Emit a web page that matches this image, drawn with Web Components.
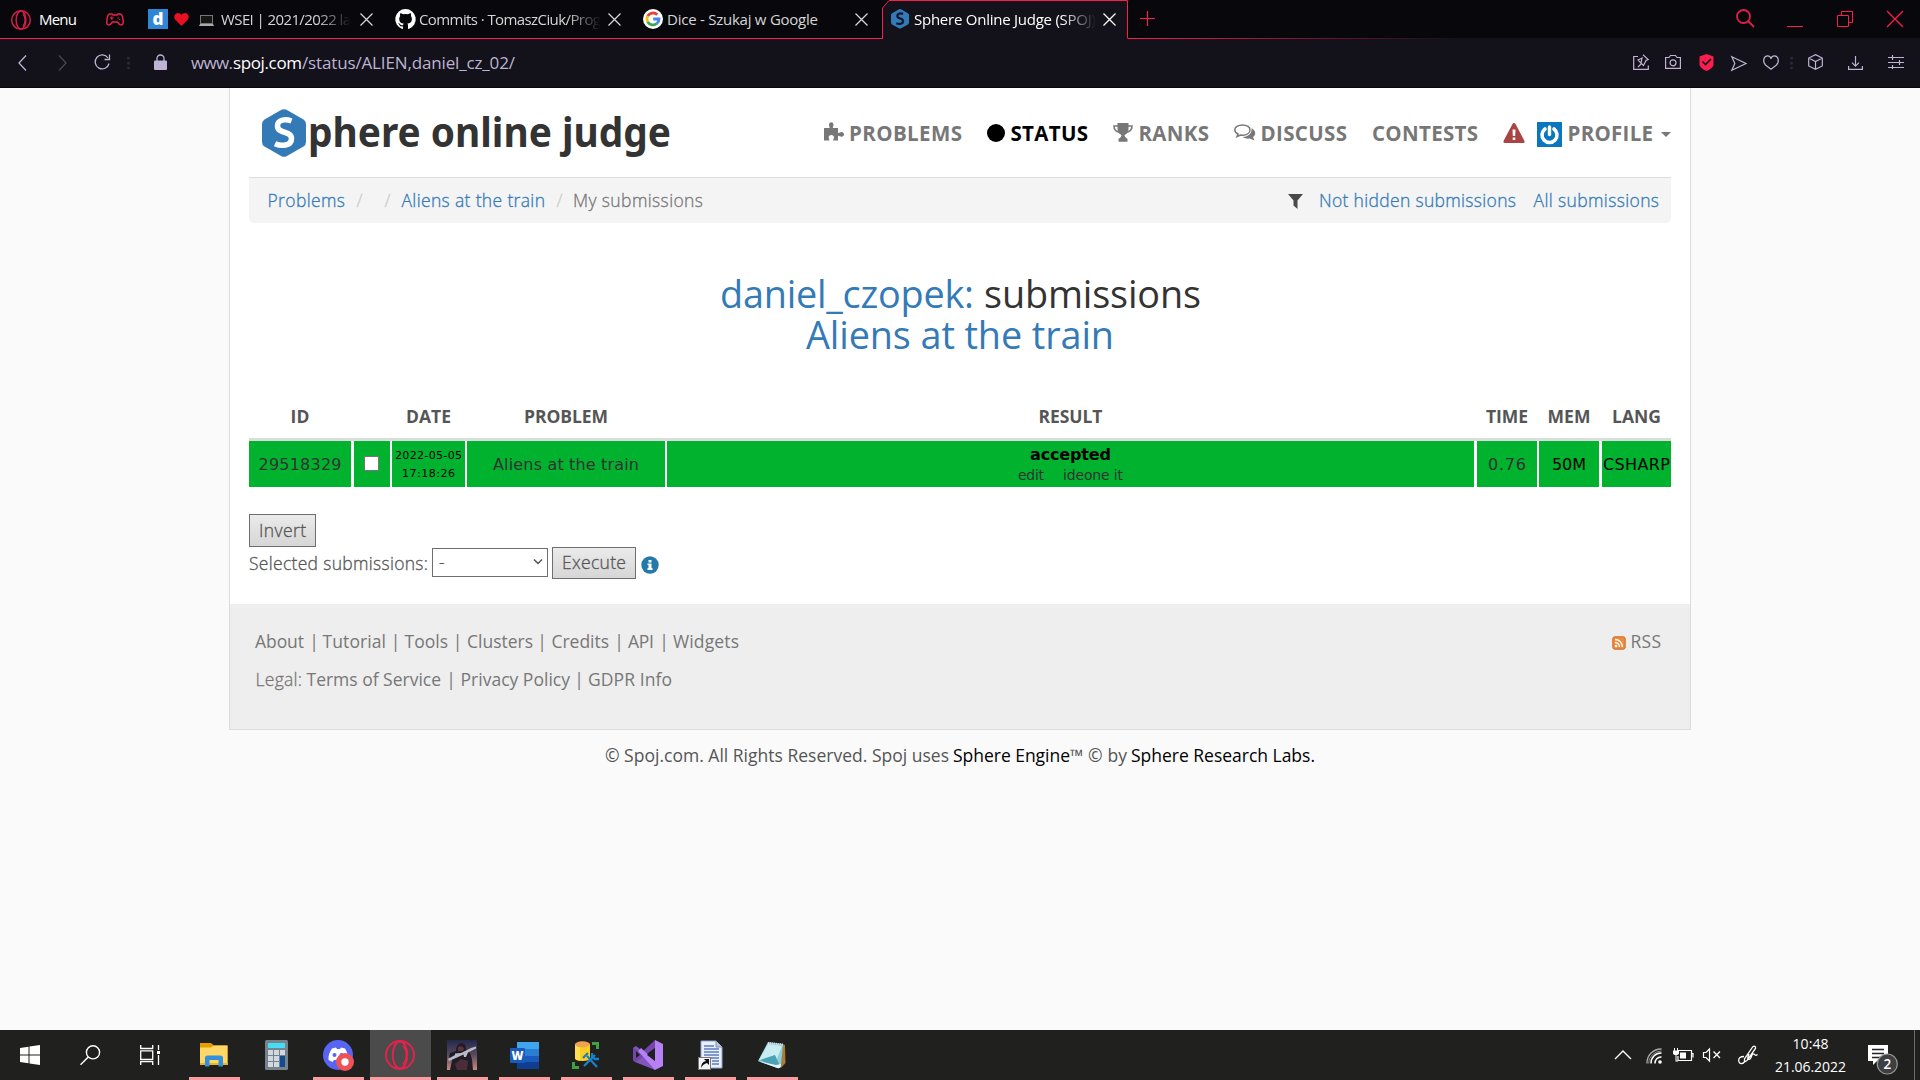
<!DOCTYPE html>
<html lang="en">
<head>
<meta charset="utf-8">
<title>Sphere Online Judge (SPOJ)</title>
<style>
html,body{margin:0;height:100%;overflow:hidden;background:#fafafa}
body{font-family:"Open Sans","Noto Sans",sans-serif}
</style>
</head>
<body>
<desktop-screen></desktop-screen>
<script>
const R='#fa1e4e', L='#bdb4d3';
const S=(c,w=1.2)=>`fill="none" stroke="${c}" stroke-width="${w}"`;
const hex=(bg,fg)=>`<path d="M19.500 .8Q22-.5 24.500.8L41.500 10.500Q44 12 44 15V33Q44 36 41.500 37.500L24.500 47.200Q22 48.500 19.500 47.200L2.500 37.500Q0 36 0 33V15Q0 12 2.500 10.500Z" fill="${bg}"/><path d="M29.500 12C24 10 15.500 10 15.500 17C15.500 25.500 29.500 21 29.500 29.500C29.500 37 19.500 37.500 13 34.700" fill="none" stroke="${fg}" stroke-width="5.500"/>`;
const ring=(c,w)=>`<circle cx="15" cy="15" r="14" fill="none" stroke="${c}" stroke-width="${w}"/><ellipse cx="15" cy="15" rx="7.300" ry="13.500" fill="none" stroke="${c}" stroke-width="${w}"/>`;
const ICONS={
 opera:[20,20,`<g transform="scale(.667)">${ring('#d31f46',2.2)}<path d="M18 5Q24 15 18 25" ${S('#d31f46',1.8)}/></g>`],
 operaBig:[30,30,ring('#e8204c',1.9)+`<path d="M18 5.500Q25 15 18 24.500" ${S('#e8204c',1.600)}/>`],
 pad:[18,13,`<path d="M4 1H6L7 2H11L12 1H14Q16 1 16.800 5L17.300 9.500Q17 12 15 12Q13.500 12 11.500 9H6.500Q4.500 12 3 12Q1 12 .7 9.500L1.200 5Q2 1 4 1Z" ${S('#e8204c',1.5)}/><path d="M4 5H7.500M5.800 3.400V6.800M11.500 4.800h1.200M13 6.500h1.200" ${S('#e8204c',1.2)}/>`],
 d:[20,20,`<rect width="20" height="20" fill="#2f86d4"/><text x="10" y="15.500" text-anchor="middle" font-family="Open Sans" font-weight="800" font-size="17" fill="#fff">d</text>`],
 heartRed:[15,13,`<path d="M7.500 13L1.300 6.800C-1 4 1 0 4 0C6 0 7 1 7.500 2.200C8 1 9 0 11 0C14 0 16 4 13.700 6.800Z" fill="#e81123"/>`],
 laptop:[15,11,`<rect x="1.500" y=".5" width="12" height="8" fill="#161616" stroke="#777"/><path d="M1 9H14L15 11H0Z" fill="#aaa"/>`],
 x:[13,13,`<path d="M.5 .5L12.500 12.500M12.500 .5L.5 12.500" ${S('currentColor',1.3)}/>`],
 github:[21,20,`<path d="M10.500 0A10.200 10.200 0 0 0 7.300 19.900C7.800 20 8 19.700 8 19.400V17.500C5.200 18.100 4.600 16.300 4.600 16.300C4.100 15.100 3.500 14.800 3.500 14.800C2.600 14.200 3.600 14.200 3.600 14.200C4.600 14.300 5.100 15.200 5.100 15.200C6 16.700 7.500 16.300 8.100 16C8.200 15.400 8.500 14.900 8.800 14.600C6.500 14.300 4.200 13.500 4.200 9.700C4.200 8.600 4.600 7.700 5.200 7C5.100 6.700 4.800 5.700 5.300 4.300C5.300 4.300 6.200 4 8.100 5.300A10 10 0 0 1 13 5.300C14.900 4 15.800 4.300 15.800 4.300C16.300 5.700 16 6.700 15.900 7C16.500 7.700 16.900 8.600 16.900 9.700C16.900 13.500 14.600 14.300 12.300 14.600C12.700 14.900 13 15.500 13 16.400V19.400C13 19.700 13.200 20 13.700 19.900A10.200 10.200 0 0 0 10.500 0Z" fill="#fff"/>`],
 google:[20,20,`<circle cx="10" cy="10" r="10" fill="#fff"/><g fill="none" stroke-width="2.800"><path d="M14.300 5.800A6 6 0 0 0 4.700 7.200" stroke="#ea4335"/><path d="M4.700 7.200A6 6 0 0 0 4.700 12.800" stroke="#fbbc05"/><path d="M4.700 12.800A6 6 0 0 0 13.900 14.500" stroke="#34a853"/><path d="M10.200 10H16A6 6 0 0 1 13.900 14.500" stroke="#4285f4"/></g>`],
 spojSmall:[18,20,`<g transform="scale(.41)">${hex('#337ab7','#0e1730')}</g>`],
 plus:[15,15,`<path d="M7.500 0V15M0 7.500H15" ${S(R,1.2)}/>`],
 search:[19,19,`<circle cx="7.500" cy="7.500" r="6.500" ${S('#e02049',1.8)}/><path d="M12 12L18 18" ${S('#e02049',1.8)}/>`],
 min:[16,16,`<path d="M0 15.500H16" ${S(R,1)}/>`],
 restore:[16,16,`<path d="M.5 4.500H11.500V15.500H.5ZM4.500 4.500V.5H15.500V11.500H11.500" ${S(R,1)}/>`],
 close:[16,16,`<path d="M0 0L16 16M16 0L0 16" ${S(R,1.3)}/>`],
 back:[9,16,`<path d="M8 .5L1 8L8 15.500" ${S('currentColor',1.3)}/>`],
 fwd:[9,16,`<path d="M1 .5L8 8L1 15.500" ${S('currentColor',1.3)}/>`],
 reload:[16,16,`<path d="M14 4A7 7 0 1 0 15 9.500" ${S(L,1.3)}/><path d="M15.500 .5V5.500H10.500" ${S(L,1.3)}/>`],
 dots:[3,16,`<path d="M1.500 2V14" ${S('#2e2a3b',2.6)} stroke-dasharray="2.600 2.400"/>`],
 lock:[13,16,`<path d="M3 7V4.500A3.500 3.500 0 0 1 10 4.500V7" ${S(L,1.3)}/><rect y="6.500" width="13" height="9.500" rx="1" fill="${L}"/>`],
 pin:[16,16,`<path d="M5 2.500H.7V15.300H15.300V11.500" ${S(L)}/><path d="M10 .8L15.200 5.500L13 6.500L11.500 9.500L10.500 11.500L8.500 9.500L5 13M8 9.200L5 6L7.500 4.800L9 4Z" ${S(L)}/>`],
 camera:[16,16,`<path d="M.6 3.500H4L5.500 1.500H10.500L12 3.500H15.400V14.400H.6Z" ${S(L)}/><circle cx="8" cy="8.800" r="3" ${S(L)}/>`],
 shield:[15,17,`<path d="M7.500 0L14.500 2.500V11Q13.500 14.500 7.500 17Q1.500 14.500 .5 11V2.500Z" fill="${R}"/><path d="M3.500 7.500L6.500 10.500L12 5" ${S('#121017',1.600)}/>`],
 send:[16,15,`<path d="M.8 .8L15 7.500L.8 14.200L3.800 7.500Z" ${S(L)}/>`],
 heart:[16,15,`<path d="M8 14.200L2.500 10C-1 6 1 .8 4.500 .8C7 .8 7.800 2.500 8 4C8.200 2.500 9 .8 11.500 .8C15 .8 17 6 13.500 10Z" ${S(L)}/>`],
 cube:[15,16,`<path d="M7.500 .6L14.300 4V12L7.500 15.400L.7 12V4ZM.7 4L7.500 7.500L14.300 4M7.500 7.500V15.400" ${S(L)}/>`],
 download:[15,14,`<path d="M7.500 0V10M4 6.700L7.500 10.200L11 6.700M.6 10V13.400H14.400V10" ${S(L)}/>`],
 sliders:[16,14,`<path d="M0 2.500H16M0 7.500H16M0 12.500H16M4.500 0V5M11.500 5V10M4.500 10V14" ${S(L,1.2)}/>`],
 puzzle:[20,19,`<path d="M0 6H5C6.500 6 5 4.500 5 3C5 1 6 .2 7.200 .2C8.500 .2 9.500 1 9.500 3C9.500 4.500 8 6 9.500 6H14V10C14 12.500 15.500 10 17.500 10C19 10 20 11 20 12.300C20 13.800 19 14.800 17.500 14.800C15.500 14.800 14 12.500 14 15V18.500H9.800C8.300 18.500 10 17 10 15.500C10 14 9 13 7.300 13C5.500 13 4.700 14 4.700 15.500C4.700 17 6.300 18.500 4.700 18.500H0Z" fill="#777"/>`],
 dot:[18,18,`<circle cx="9" cy="9" r="9" fill="#000"/>`],
 trophy:[20,19,`<path d="M4.500 0H15.500V6Q15.500 10 11.500 12Q11.500 14.500 14.500 16V18.700H5.500V16Q8.500 14.500 8.500 12Q4.500 10 4.500 6Z" fill="#777"/><path d="M5 3H1Q.8 8 7 9.500M15 3H19Q19.200 8 13 9.500" ${S('#777',1.5)}/>`],
 chat:[22,17,`<path d="M8.500 1C13 1 16 3.300 16 6C16 9 13 11.200 8.500 11.200L6.500 11L3 12.500L4 10C2 9 .8 7.800 .8 6C.8 3.300 4 1 8.500 1Z" ${S('#777',1.5)}/><path d="M17.500 4C22.500 7 22 11 19 13L20.500 16.500L16 14.500C12.500 15 10 14 8.500 13C15 13 18.500 8.500 17.500 4Z" fill="#777"/>`],
 warn:[22,20,`<path d="M11 0Q12 0 12.500 1L21.500 18Q22 20 20.500 20H1.500Q0 20 .5 18L9.500 1Q10 0 11 0Z" fill="#a94442"/><path d="M9.500 6.500H12.500L12.200 13H9.800ZM9.700 14.500H12.300V17H9.700Z" fill="#fff"/>`],
 avatar:[25,25,`<rect width="25" height="25" fill="#0a76bd"/><path d="M8 7A7.500 7.500 0 1 0 17 7" ${S('#fff',3.600)} stroke-linecap="round"/><path d="M12.500 5V12.500" ${S('#fff',3.400)} stroke-linecap="round"/>`],
 caret:[10,5,`<path d="M0 0H10L5 5Z" fill="#777"/>`],
 filter:[15,15,`<path d="M0 0H15L9.500 6.500V15L5.500 11.500V6.500Z" fill="#4a4a4a"/>`],
 info:[18,18,`<circle cx="9" cy="9" r="8.700" fill="#2479a9"/><path d="M7.500 4H10.500V6.500H7.500ZM6.500 7.500H10.500V12H11.500V14H6.500V12H7.500V9H6.500Z" fill="#fff"/>`],
 rss:[14,14,`<rect x=".8" y=".8" width="12.400" height="12.400" rx="2" fill="#f08a3c" stroke="#cf6a27"/><circle cx="4" cy="10" r="1.300" fill="#fff"/><path d="M3 6.500A4.500 4.500 0 0 1 7.500 11M3 3.500A7.500 7.500 0 0 1 10.500 11" ${S('#fff',1.300)}/>`],
 logo:[410,50,`<g>${hex('#337ab7','#fff')}</g><text x="46" y="38" font-family="Noto Sans" font-weight="700" font-size="41.500" fill="#333" textLength="363" lengthAdjust="spacingAndGlyphs">phere online judge</text>`],
 win:[20,20,`<path d="M0 3L8.500 1.700V9.500H0ZM9.500 1.500L20 0V9.500H9.500ZM0 10.500H8.500V18.300L0 17ZM9.500 10.500H20V20L9.500 18.500Z" fill="#fff"/>`],
 find:[20,20,`<circle cx="13" cy="7.300" r="6.600" ${S('#fff',1.400)}/><path d="M8.300 12L.5 19.700" ${S('#fff',1.500)}/>`],
 task:[20,20,`<path d="M.7 0V3.500H12.700V0M.7 20V16.500H12.700V20M.7 5.800H12.700V14.300H.7ZM18.500 0V5M18.500 10V20" ${S('#fff',1.300)}/><rect x="17" y="6" width="3" height="3" fill="#fff"/>`],
 folder:[28,24,`<path d="M0 0H11L14 2.500H27.500V22H0Z" fill="#e59d00"/><path d="M0 4.500H11L14 2.500H27.500V22H0Z" fill="#ffd765"/><path d="M0 20H28V22H0Z" fill="#e8b32f"/><path d="M5 23.500V15Q5 12.500 7.500 12.500H20.500Q23 12.500 23 15V23.500H18.500V17H9.500V23.500Z" fill="#3290dd"/>`],
 calc:[23,30,`<rect width="23" height="30" rx="1.500" fill="#77828d"/><rect x="3" y="3" width="17" height="5" fill="#45dcf8"/><g fill="#d0d8e0"><path d="M3 10h5v5H3zM9 10h5v5H9zM15 10h5v5h-5zM3 16h5v5H3zM9 16h5v5H9zM3 22h5v5H3zM9 22h5v5H9z"/></g><path d="M15 16h5v11h-5z" fill="#104a90"/>`],
 discord:[31,31,`<circle cx="15" cy="15" r="15" fill="#5865f2"/><path d="M9 8.500L13 7.500L14 9H17L18 7.500L22 8.500Q25.500 14 25 20L21 22L19.500 20H11L9.500 22L5.500 20Q5 14 9 8.500Z" fill="#fff"/><circle cx="11.500" cy="15" r="2" fill="#5865f2"/><circle cx="18.500" cy="15" r="2" fill="#5865f2"/><circle cx="22" cy="22" r="9" fill="#ed5258"/><circle cx="22" cy="22" r="3.700" fill="#fff"/>`],
 cs:[30,30,`<defs><linearGradient id="sky" x1="0" y1="0" x2="0" y2="1"><stop offset="0" stop-color="#23284a"/><stop offset=".5" stop-color="#5a4a60"/><stop offset="1" stop-color="#c98a80"/></linearGradient></defs><rect width="30" height="30" fill="url(#sky)"/><path d="M3 30L5 20L2 17L3 13L9 11Q9 4 14 3Q19 3 19 9L23 13L25 19L26 30Z" fill="#221c26"/><path d="M11 7Q14 5 17 8L16 11H11Z" fill="#5a3634"/><path d="M1 19L8 15L8 13.500L14 13L24 8L29 6.500V8.500L21 12.500L19 17L17 17L16.500 14.500L10 17.500L2 21Z" fill="#b9bcc6"/><path d="M8 24L14 19L21 21L20 30H10Z" fill="#4a2d38"/>`],
 word:[29,27,`<path d="M7 0H29V7H7Z" fill="#41a5ee"/><path d="M7 7H29V14H7Z" fill="#2b7cd3"/><path d="M7 14H29V20H7Z" fill="#185abd"/><path d="M7 20H29V27H7Z" fill="#103f91"/><rect y="6" width="15" height="15" rx="1" fill="#185abd"/><text x="7.500" y="18" text-anchor="middle" font-family="Open Sans" font-weight="800" font-size="11.500" fill="#fff">W</text>`],
 ssms:[28,28,`<path d="M3 3V17Q3 20 10.500 20Q18 20 18 17V3Z" fill="#ffcf20"/><path d="M3 3V17Q3 19 8 19.500V5Z" fill="#ffe052"/><ellipse cx="10.500" cy="3.300" rx="7.500" ry="3" fill="#f0a453"/><path d="M20 2.500H25.500V8M1.500 21V26.500H7" ${S('#3fa044',3)}/><path d="M12 25L23 14M15 15L25 26M11 17L16 12M20 12V16L23 18H27" ${S('#1680cc',2.300)}/>`],
 vs:[30,30,`<path d="M0 8L3 6L22 21V30L2 22L0 20Z" fill="#8155bd"/><path d="M0 8V20L3 22L22 8V0L8 13L3 9Z" fill="#7246ab"/><path d="M22 0L30 4V26L22 30L5 11L8 8L22 21Z" fill="#b681f5"/><path d="M22 8V21L14 15Z" fill="#202020"/><path d="M3 11V18L7 15Z" fill="#202020"/>`],
 doc:[25,30,`<path d="M3 1H18L24 7V28H3Z" fill="#e9effb" stroke="#8ea5cf"/><path d="M18 1V7H24" fill="#b8c8e5" stroke="#7890bd"/><path d="M6 6H16M6 9H21M6 12H21M6 15H21M12 18H21M14 21H21M14 24H21" ${S('#5c7dbb',1.300)}/><rect x=".5" y="17.500" width="12" height="12" fill="#f3f3f3" stroke="#777"/><path d="M3 28Q3 22 8 21L6 19H11V25L9 23Q5 24 3 28Z" fill="#111"/>`],
 note:[28,28,`<path d="M24 3L27 4L27.500 22L23 27Z" fill="#a87c38"/><path d="M10 1L25 3L23 26Q22 28 18 26.500L0 20Z" fill="#8fcdd8"/><path d="M10 3L24 5L19 18L1 19Z" fill="#c7edf0"/><path d="M2 19L17 14L22 25L18 26Z" fill="#4aa3b4"/><path d="M0 20L18 24L23 23L22.500 26Q21 28 18 26.500Z" fill="#e8f4f5"/><path d="M10 2L25 3.500" stroke="#ddd" stroke-width="2" stroke-dasharray="1 1"/>`],
 up:[16,10,`<path d="M0 9L8 1L16 9" ${S('#fff',1.4)}/>`],
 wifi:[16,16,`<path d="M1 15.500A14 14 0 0 1 15.500 1" ${S('#aaa',1.400)}/><path d="M5 15.500A10 10 0 0 1 15.500 5M9 15.500A6 6 0 0 1 15.500 9" ${S('#fff',1.500)}/><path d="M2.500 15.500A13 13 0 0 1 15.500 3" ${S('#888',1)}/><circle cx="14" cy="14" r="1.800" fill="#fff"/>`],
 batt:[20,14,`<path d="M5 2.500H18.500V12.500H5V8M18.500 5.500H20V9.500" ${S('#fff',1.200)}/><rect x="7" y="4.500" width="6" height="6" fill="#fff"/><path d="M0 2.500H6V5Q6 7 3 7Q0 7 0 5ZM1 0H2V3H1ZM4 0H5V3H4ZM2.500 7H3.500V12.500H5V13.500H2.500Z" fill="#fff"/>`],
 mute:[18,14,`<path d="M.5 4.500H3L6.500 1V13L3 9.500H.5Z" ${S('#fff',1.200)}/><path d="M10.500 3.500L17 10M17 3.500L10.500 10" ${S('#fff',1.300)}/>`],
 pen:[20,20,`<path d="M6 11.500Q.5 11.500 .7 15.500Q1 19 4 18.500Q7 18 6.500 14L15 1.500Q18 .5 17.500 3.500L9 15.500L6.500 17M11 9Q8 16 12 14Q13 13 14 10Q15 8 16.500 9.500Q17.500 11 19.500 9.500" ${S('#fff',1.300)}/>`],
 notif:[31,31,`<path d="M0 0H20V16H9L5 20V16H0Z" fill="#fff"/><path d="M4 4.500H16M4 8.500H16M4 12.500H12" ${S('#222',1.300)}/><circle cx="19.300" cy="19" r="10" fill="#3e3f40" stroke="#999" stroke-width="1.200"/><text x="19.300" y="24" text-anchor="middle" font-family="Open Sans" font-weight="600" font-size="13.500" fill="#fff">2</text>`]
};
/* Icon from the shared set, drawn at its natural pixel size. */
class UiIcon extends HTMLElement{
 connectedCallback(){
  if(this.shadowRoot)return;
  const [w,h,b]=ICONS[this.getAttribute('name')];
  this.attachShadow({mode:'open'}).innerHTML=`<style>:host{display:block;flex:none;width:${w}px;height:${h}px}svg{display:block;overflow:visible}</style><svg width="${w}" height="${h}" viewBox="0 0 ${w} ${h}">${b}</svg>`;
 }
}
customElements.define('ui-icon',UiIcon);
/* A one-line label whose letter spacing is tuned to fill the width in its w attribute. */
class FitText extends HTMLElement{
 connectedCallback(){
  if(this.shadowRoot)return;
  const w=+this.getAttribute('w');
  this.attachShadow({mode:'open'}).innerHTML=`<style>:host{display:block;flex:none;width:${w}px;white-space:pre}span{display:inline-block}</style><span><slot></slot></span>`;
  const s=this.shadowRoot.querySelector('span'),n=this.textContent.length;
  const nat=s.getBoundingClientRect().width;
  if(n===1)s.style.marginLeft=(w-nat)/2+'px';
  else if(nat)s.style.letterSpacing=((w-nat)/(n-1)).toFixed(3)+'px';
 }
}
customElements.define('fit-text',FitText);
/* Row content: T = text (left, right, text), I = icon (left, name, vertical nudge). */
const T=(a,b,t,st='')=>({x:a-1,w:b-a+2,h:g=>`<fit-text w="${b-a+2}" style="margin-left:${g}px;${st}">${t}</fit-text>`});
const I=(a,n,dy=0,st='')=>({x:a,w:ICONS[n][0],h:g=>`<ui-icon name="${n}" style="margin-left:${g}px;${dy?`position:relative;top:${dy}px;`:''}${st}"></ui-icon>`});
const row=(start,items)=>{let c=start;return items.map(i=>{const g=+(i.x-c).toFixed(2);c=i.x+i.w;return i.h(g)}).join('')};
const def=(name,css,html)=>customElements.define(name,class extends HTMLElement{
 connectedCallback(){ if(!this.shadowRoot)this.attachShadow({mode:'open'}).innerHTML=`<style>*{box-sizing:border-box}:host{display:block;box-sizing:border-box}.r{display:flex;align-items:center}${css}</style>${html}`; }
});
/* Light text with a hairline outline: a weight between light and regular. */
const book='font-weight:300;-webkit-text-stroke:.3px currentColor';
const fade='-webkit-mask-image:linear-gradient(90deg,#000 calc(100% - 34px),transparent)';
def('tab-strip',`
:host{display:flex;height:39px;background:#08080c;color:#d5d5d5;font-size:15px;line-height:20px}
.a{width:882px;padding-bottom:8px;border-bottom:1px solid ${R}}
.b{width:246px;position:relative;padding-bottom:8px;color:#fff}
.b svg{position:absolute;left:0;top:0}.b>:not(svg){position:relative}
.c{flex:1;padding-bottom:8px;border-bottom:1px solid;border-image:linear-gradient(90deg,${R},#12101a 330px) 1}`,
`<div class="r a">${row(0,[I(11,'opera',4.5),T(40,76,'Menu','color:#fff;margin-top:7px'),I(106,'pad',4),I(148,'d',4),I(174,'heartRed',4),I(199,'laptop',5),T(222,350,'WSEI | 2021/2022 la',fade+';margin-top:7px'),I(360,'x',4.5),I(395,'github',4),T(420,600,'Commits · TomaszCiuk/Prog',fade+';margin-top:7px'),I(608,'x',4.5),I(643,'google',4),T(668,817,'Dice - Szukaj w Google','margin-top:7px'),I(855,'x',4.5)])}</div>
<div class="r b"><svg width="246" height="39"><path d="M0 38.500H.5V8L7 .5H245.500V38.500" fill="#13111a" stroke="${R}"/><path d="M1 38.500H245" stroke="#13111a"/></svg>${row(882,[I(891,'spojSmall',3.5),T(915,1095,'Sphere Online Judge (SPOJ)',fade+';top:3.500px'),I(1103,'x',3.5)])}</div>
<div class="r c">${row(1128,[I(1140,'plus',3.5),I(1736,'search',3),I(1787,'min',4),I(1837,'restore',4),I(1887,'close',4)])}</div>`);
def('address-bar',`:host{display:flex;align-items:center;height:49px;background:#13111a;color:${L};font-size:17px;line-height:24px;border-bottom:1px solid #08080c}`,
row(0,[I(18,'back'),I(58,'fwd',0,'color:#4a4656'),I(94,'reload',-1),I(127,'dots'),I(154,'lock',-1),T(192,232,'www.'),T(234,301,'spoj.com','color:#fff'),T(303,514,'/status/ALIEN,daniel_cz_02/'),I(1633,'pin',-1),I(1665,'camera',-1),I(1698.5,'shield',-.5),I(1731,'send',.5),I(1763,'heart',-1),I(1790,'dots'),I(1808,'cube',-1),I(1848,'download'),I(1888,'sliders',-1)]));
def('site-nav',`:host{display:flex;align-items:center;height:90px;color:#777;font-weight:700;font-size:20.5px;line-height:30px;border-bottom:1px solid #dcdcdc}`,
row(249,[I(262,'logo',1.5),I(824,'puzzle',-1.500),T(850,961,'PROBLEMS'),I(987,'dot'),T(1011.5,1087,'STATUS','color:#000'),I(1113,'trophy'),T(1139.5,1208,'RANKS'),I(1234,'chat'),T(1261.5,1346,'DISCUSS'),T(1373,1477,'CONTESTS'),I(1503,'warn'),I(1537,'avatar',1.500),T(1568.5,1652,'PROFILE'),I(1661,'caret',1.500)]));
def('crumb-bar',`:host{display:flex;align-items:center;height:45px;padding-bottom:1px;background:#f4f4f4;border-radius:0 0 5px 5px;color:#337ab7;${book};font-size:17.5px;line-height:25px}`,
row(249,[T(268.5,344,'Problems'),T(357,362,'/','color:#ccc'),T(385,390,'/','color:#ccc'),T(402.5,544,'Aliens at the train'),T(557,562,'/','color:#ccc'),T(574,702,'My submissions','color:#777'),I(1287.5,'filter',1),T(1320,1515,'Not hidden submissions'),T(1534.5,1658,'All submissions')]));
def('page-title',`:host{height:181px;padding-top:50px;color:#333;font-size:37.8px;line-height:41.25px}.r{color:#337ab7}`,
`<div class="r">${row(249,[T(721,973,'daniel_czopek:'),T(985,1200,'submissions','color:#333')])}</div><div class="r">${row(249,[T(807,1113,'Aliens at the train')])}</div>`);
const ctr=(w,t,st='')=>`<fit-text w="${w}" style="${st}">${t}</fit-text>`;
def('results-table',`
.g{display:grid;grid-template-columns:105px 38px 75px 200px 810px 62px 63px 69px}
.g>div{display:flex;flex-direction:column;align-items:center;justify-content:center;margin-right:2px}
.g>div:first-child,.g>div:nth-child(5),.g>div:nth-child(7){margin-right:3px}.g>div:last-child{margin-right:0}
.h{height:37px;border-bottom:3px solid #dcdcdc;color:#555;font-weight:700;font-size:17.5px;line-height:24px;padding-bottom:12px}
.d{height:46px;color:#000;font-family:"DejaVu Sans",sans-serif;font-size:16px;line-height:20px}
.d>div{background:#00b22d;padding-top:1px}.k{color:#333}
input{margin:0 1px 2px 0;width:15px;height:15px;appearance:none;background:#fff;border:1px solid #767676;border-width:1px 1.500px 1.500px 1px}`,
`<div class="g h"><div>${ctr(19,'ID')}</div><div></div><div>${ctr(45,'DATE')}</div><div>${ctr(84,'PROBLEM')}</div><div>${ctr(64,'RESULT')}</div><div>${ctr(42,'TIME')}</div><div>${ctr(43,'MEM')}</div><div>${ctr(49,'LANG')}</div></div>
<div class="g d"><div class="k">${ctr(83,'29518329')}</div><div><input type="checkbox"></div><div style="font-size:11px;line-height:18px;padding-top:1px">${ctr(67,'2022-05-05')}${ctr(53,'17:18:26')}</div><div class="k">${ctr(146,'Aliens at the train')}</div><div style="padding:0 0 1px">${ctr(81,'accepted','font-weight:700;height:22px;line-height:24px')}<div class="r k" style="font-size:14px;height:20px;">${ctr(26,'edit')}${ctr(60,'ideone it','margin-left:19px')}</div></div><div class="k">${ctr(38,'0.76')}</div><div>${ctr(34,'50M')}</div><div>${ctr(67,'CSHARP')}</div></div>`);
def('submission-actions',`:host{padding-top:27px;height:117px;color:#555;${book};font-size:17.5px;line-height:24px}
.btn{display:flex;justify-content:center;border:1px solid #6e6e6e;background:linear-gradient(#ebebeb,#d6d6d6);height:33px;line-height:31px;width:67px}
.sel{display:flex;align-items:center;justify-content:space-between;width:116px;height:29px;border:1px solid #6e6e6e;background:#fff;margin:-2px 0 0 4px;padding:0 4px 0 6px}`,
`<div class="btn">${ctr(47,'Invert')}</div><div class="r" style="height:32px"><fit-text w="179">Selected submissions:</fit-text><div class="sel"><span>-</span><svg width="10" height="6"><path d="M1 .5L5 4.500L9 .5" fill="none" stroke="#555" stroke-width="1.500"/></svg></div><div class="btn" style="width:84px;height:32px;line-height:29px;margin:-1px 0 0 4px">${ctr(64,'Execute')}</div><ui-icon name="info" style="margin:3px 0 0 5px"></ui-icon></div>`);
const bar=x=>T(x-3,x+3,'|');
def('site-footer',`:host{height:126px;padding-top:18px;background:#eee;border:1px solid #dcdcdc;border-top:0;color:#777;font-size:17.5px;line-height:38px}`,
`<div class="r">${row(230,[T(256,303,'About'),bar(314),T(323.5,385,'Tutorial'),bar(395.5),T(405.5,447,'Tools'),bar(457.5),T(468,532,'Clusters'),bar(542),T(552.5,608,'Credits'),bar(619),T(629,653,'API'),bar(664),T(674,738,'Widgets'),I(1612,'rss',2),T(1631.5,1660,'RSS')])}</div>
<div class="r">${row(230,[T(256.5,301,'Legal:',book),T(307.5,440,'Terms of Service'),bar(451),T(461.5,569,'Privacy Policy'),bar(579),T(589,671,'GDPR Info')])}</div>`);
def('copyright-line',`:host{display:flex;height:50px;line-height:51px;color:#555;font-size:17.5px}`,
row(0,[T(606,948,'© Spoj.com. All Rights Reserved. Spoj uses'),T(954,1069,'Sphere Engine','color:#000'),T(1071,1082,'™'),T(1089,1126,'© by'),T(1132,1314,'Sphere Research Labs.','color:#000')]));
def('site-page',`:host{flex:1;background:#fafafa}.box{width:1462px;margin:0 auto;height:516px;padding:0 19px;background:#fff;border:1px solid #dcdcdc;border-width:0 1px}
site-footer{width:1462px;margin:0 auto}`,
`<div class="box"><site-nav></site-nav><crumb-bar></crumb-bar><page-title></page-title><results-table></results-table><submission-actions></submission-actions></div><site-footer></site-footer><copyright-line></copyright-line>`);
const tile=(n,cls='')=>`<div class="t ${cls}"><ui-icon name="${n}"></ui-icon></div>`;
def('task-bar',`
:host{display:flex;height:50px;background:#20211f;color:#fff;font-size:14px}
.l{width:60px;display:flex;align-items:center;justify-content:center}
.t{width:62px;display:flex;align-items:center;justify-content:center;position:relative;left:-.5px}
.o::after{content:"";position:absolute;left:6px;width:51px;height:3px;bottom:0;background:#fa9da0}
.n{background:linear-gradient(#4b4b4b,#4b4b4b) 1px 0/61px 50px no-repeat}.n::after{left:1px;width:61px}
.clock{display:flex;flex-direction:column;align-items:center;width:74px;line-height:23px;height:50px;padding-top:2px}`,
`<div class="l"><ui-icon name="win"></ui-icon></div><div class="l"><ui-icon name="find"></ui-icon></div><div class="l"><ui-icon name="task"></ui-icon></div><div style="width:3.5px"></div>
${tile('folder','o')}${tile('calc')}${tile('discord','o')}${tile('operaBig','o n')}${tile('cs','o')}${tile('word','o')}${tile('ssms','o')}${tile('vs','o')}${tile('doc','o')}${tile('note','o')}
<div class="r">${row(803.5,[I(1615,'up'),I(1646,'wifi',1),I(1673,'batt',0),I(1703,'mute'),I(1738,'pen')])}</div>
<div class="clock" style="margin-left:15.5px">${ctr(36,'10:48')}${ctr(71,'21.06.2022')}</div>
<ui-icon name="notif" style="margin:15px 0 0 20.5px"></ui-icon><div style="width:1px;height:50px;margin-left:15px;background:#6b6b6b"></div>`);
def('desktop-screen',`:host{display:flex;flex-direction:column;width:1920px;height:1080px;font-family:"Open Sans","Noto Sans",sans-serif}`,
`<tab-strip></tab-strip><address-bar></address-bar><site-page></site-page><task-bar></task-bar>`);
</script>
</body>
</html>
